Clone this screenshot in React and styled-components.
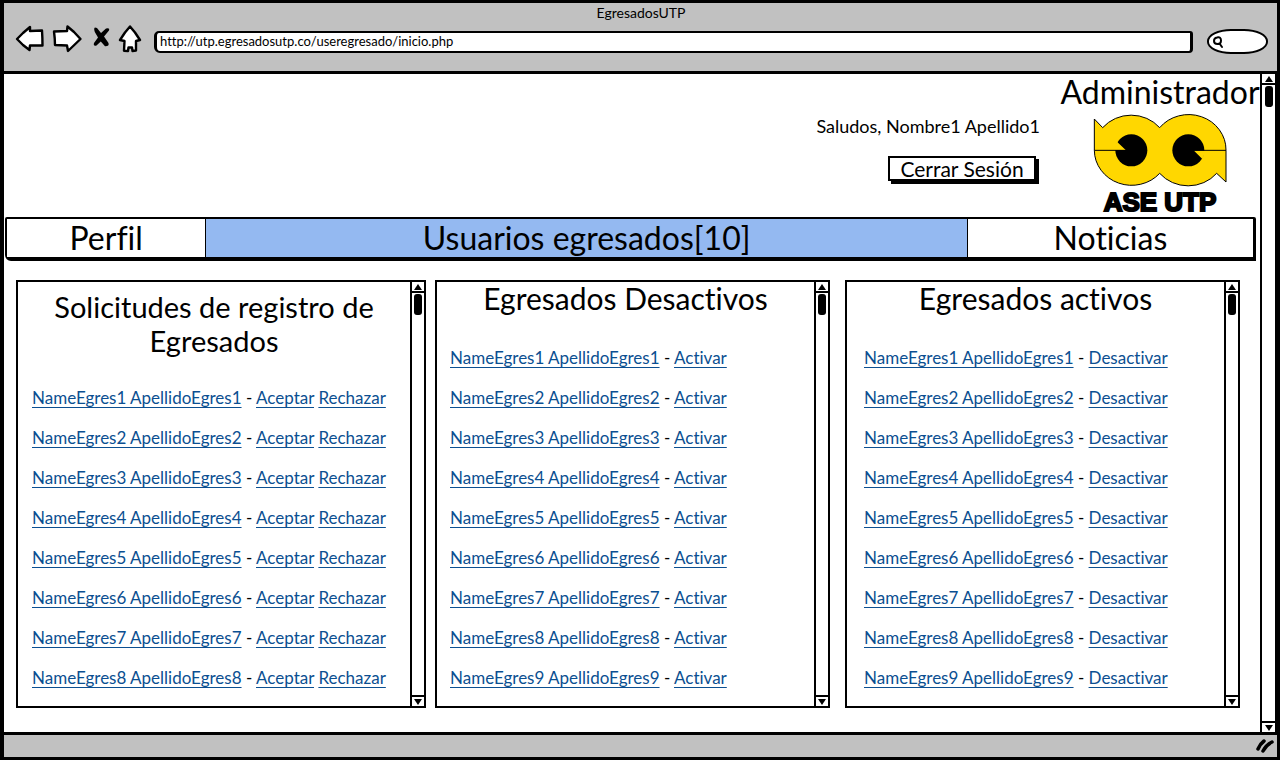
import React from "react";
import styled, { createGlobalStyle } from "styled-components";

const INK = "#000000";
const CHROME = "#c1c1c1";
const LINK = "#0b4f91";

const GlobalStyle = createGlobalStyle`
  * { box-sizing: border-box; }
  body {
    margin: 0;
    background: #ffffff;
    color: ${INK};
    font-family: Lato, "Open Sans", sans-serif;
    font-variant-ligatures: none;
  }
  button, input { font-family: inherit; color: inherit; font-variant-ligatures: none; }
  h1, h2, p, ul { margin: 0; padding: 0; font-weight: 400; }
`;

const Window = styled.div`
  display: flex;
  flex-direction: column;
  min-height: 100vh;
  border: 3px solid ${INK};
  border-left-width: 4px;
`;

const Chrome = styled.header`
  background: ${CHROME};
  border-bottom: 3px solid ${INK};
  padding: 0 9px 17px 10px;
`;

const WindowTitle = styled.p`
  font-size: 14px;
  line-height: 20px;
  text-align: center;
`;

const Toolbar = styled.div`
  display: flex;
  align-items: center;
  gap: 2px;
`;

const IconButton = styled.button`
  display: block;
  width: ${(p) => p.$width}px;
  height: 28px;
  padding: 0;
  border: 0;
  background: none;
`;

const Glyph = styled.svg`
  display: block;
`;

const Address = styled.input`
  flex: 1;
  min-width: 0;
  height: 22px;
  margin: 6px 12px 0 8px;
  padding: 0 3px 2px;
  border: 2px solid ${INK};
  border-width: 2px 3px;
  border-radius: 5px 3px 4px 6px;
  background: #ffffff;
  font-size: 13px;
`;

const SearchBox = styled.label`
  display: flex;
  align-items: center;
  width: 61px;
  height: 25px;
  margin-top: 6px;
  padding-left: 2px;
  border: 2px solid ${INK};
  border-radius: 24px / 12px;
  background: #ffffff;
`;

const SearchInput = styled.input`
  width: 36px;
  border: 0;
  padding: 0;
  background: none;
  font-size: 13px;
`;

const Viewport = styled.div`
  display: flex;
  flex: 1;
`;

const Page = styled.main`
  flex: 1;
  min-width: 0;
`;

const Head = styled.div`
  display: flex;
  justify-content: flex-end;
  height: 143px;
`;

const Account = styled.div`
  display: flex;
  flex-direction: column;
  align-items: flex-end;
  gap: 20px;
  padding-top: 42px;
`;

const Greeting = styled.p`
  font-size: 18px;
  line-height: 20px;
`;

const LogoutButton = styled.button`
  width: 148px;
  height: 25px;
  margin-right: 4px;
  padding: 0;
  border: 2px solid ${INK};
  background: #ffffff;
  box-shadow: 3px 3px 0 ${INK};
  font-size: 21px;
  line-height: 20px;
`;

const Brand = styled.div`
  display: flex;
  flex-direction: column;
  align-items: center;
  width: 200px;
  margin-left: 20px;
`;

const Role = styled.h1`
  padding-bottom: 4px;
  font-size: 32px;
  line-height: 36px;
`;

const BrandName = styled.p`
  font-family: "Liberation Sans", Arial, sans-serif;
  font-size: 26px;
  font-weight: 700;
  line-height: 28px;
  -webkit-text-stroke: 2px ${INK};
`;

const Tabs = styled.nav`
  display: grid;
  grid-template-columns: 199fr 764fr 287fr;
  margin: 0 4px 19px 1px;
  border: 2px solid ${INK};
  border-width: 2px 3px 4px 2px;
  border-radius: 2px 2px 0 6px;
`;

const Tab = styled.a`
  padding-bottom: 1px;
  border-left: ${(p) => (p.$first ? "0" : `1px solid ${INK}`)};
  background: ${(p) => (p.$active ? "#94b9f1" : "#ffffff")};
  color: ${INK};
  font-size: 32px;
  line-height: 37px;
  text-align: center;
  text-decoration: none;
`;

const Panels = styled.div`
  display: grid;
  grid-template-columns: 410fr 404fr 410fr;
  margin: 0 20px 24px 12px;
`;

const Panel = styled.section`
  display: flex;
  margin-left: ${(p) => p.$lead}px;
  border: 2px solid ${INK};
`;

const PanelBody = styled.div`
  flex: 1;
  min-width: 0;
  padding: ${(p) => (p.$roomy ? 8 : 0)}px 0 8px;
`;

const PanelTitle = styled.h2`
  margin-bottom: 20px;
  padding: 0 20px;
  font-size: 29px;
  line-height: 34px;
  text-align: center;
`;

const CompactTitle = styled(PanelTitle)`
  margin-bottom: 24px;
  font-size: 30px;
  line-height: 32px;
`;

const People = styled.ul`
  padding-left: ${(p) => p.$inset}px;
  list-style: none;
`;

const Person = styled.li`
  font-size: 17px;
  line-height: 40px;
  white-space: nowrap;
`;

const TextLink = styled.a`
  color: ${LINK};
  text-decoration: underline 1px ${LINK};
  text-underline-offset: 3px;
  text-decoration-skip-ink: none;
`;

const Track = styled.div`
  display: flex;
  flex-direction: column;
  justify-content: space-between;
  width: ${(p) => (p.$page ? 17 : 14)}px;
  border-left: 2px solid ${INK};
  border-right: ${(p) => (p.$page ? `2px solid ${INK}` : "0")};
`;

const Arrow = styled.button`
  display: flex;
  align-items: center;
  justify-content: center;
  width: 100%;
  height: 11px;
  padding: 0;
  border: 0 solid ${INK};
  border-width: ${(p) => (p.$down ? "2px 0 0" : "0 0 2px")};
  background: #ffffff;
`;

const Thumb = styled.div`
  width: 8px;
  height: 21px;
  margin: 1px auto 0;
  border-radius: 3px;
  background: ${INK};
`;

const Status = styled.footer`
  display: flex;
  justify-content: flex-end;
  align-items: center;
  height: 25px;
  border-top: 3px solid ${INK};
  background: ${CHROME};
`;

function ScrollBar({ page }) {
  return (
    <Track $page={page}>
      <div>
        <Arrow aria-label="Subir">
          <Glyph width="8" height="6" viewBox="0 0 8 6">
            <path d="M4 0 L8 6 H0 Z" />
          </Glyph>
        </Arrow>
        <Thumb />
      </div>
      <Arrow $down aria-label="Bajar">
        <Glyph width="8" height="6" viewBox="0 0 8 6">
          <path d="M0 0 H8 L4 6 Z" />
        </Glyph>
      </Arrow>
    </Track>
  );
}

const outline = {
  fill: "#ffffff",
  stroke: INK,
  strokeWidth: 2.4,
  strokeLinejoin: "round",
};

function NavButtons() {
  return (
    <>
      <IconButton $width={34} aria-label="Atrás">
        <Glyph width="34" height="28" viewBox="0 0 34 28">
          <path {...outline} d="M3 14 L9 8 L16 2 L16 6 L28 5.500 Q28.500 13 28.500 20.500 L16 20.500 L15.500 25 L9 20 Z" />
        </Glyph>
      </IconButton>
      <IconButton $width={34} aria-label="Adelante">
        <Glyph width="34" height="28" viewBox="0 0 34 28">
          <path {...outline} d="M4 6.500 L17 6 L17.500 1.500 L24 7 L30.500 14 L18 26 L17 20.500 L5 20 Q5 14 4 6.500 Z" />
        </Glyph>
      </IconButton>
      <IconButton $width={28} aria-label="Detener">
        <Glyph width="28" height="28" viewBox="0 0 28 28">
          <path d="M9 2.500 L11 3 L15 8 L20 3.500 Q24 2.500 23 5.500 L18 11.500 L22.500 18 Q23.500 21.500 19 21.300 L14.800 16.500 L10.500 20.500 Q7 21.500 8 18 L12 12.500 L8.800 7 Q7.500 3 9 2.500 Z" />
        </Glyph>
      </IconButton>
      <IconButton $width={28} aria-label="Inicio">
        <Glyph width="28" height="28" viewBox="0 0 28 28">
          <path {...outline} d="M14 1.500 L19 7.500 L24 15 L20 16 L20 25.500 L16.500 26 L16 22.500 L12.500 22.500 L12 26 L8 25.800 L8.500 16 L4 15 L9 7.500 Z" />
        </Glyph>
      </IconButton>
    </>
  );
}

function OwlMark() {
  return (
    <Glyph width="134" height="74" viewBox="131 132 402 222">
      <path
        d="M135 147 L160 173 A112 106 0 0 1 331 173 A112 106 0 0 1 530 241 V336 L502 310 A112 106 0 0 1 331 310 A112 106 0 0 1 135 241 Z"
        fill="#ffd700"
        stroke={INK}
        strokeWidth="3"
      />
      <circle cx="246" cy="241" r="48" />
      <circle cx="417" cy="241" r="48" />
      <path d="M229 240 L203 215 L192 240 Z M434 242 L459 267 L470 242 Z" fill="#ffd700" />
      <path d="M135 241 H229 M434 241 H530" stroke={INK} strokeWidth="3" />
    </Glyph>
  );
}

const columns = [
  {
    title: "Solicitudes de registro de Egresados",
    actions: ["Aceptar", "Rechazar"],
    count: 8,
    lead: 0,
    inset: 14,
    roomy: true,
  },
  { title: "Egresados Desactivos", actions: ["Activar"], count: 9, lead: 9, inset: 13 },
  { title: "Egresados activos", actions: ["Desactivar"], count: 9, lead: 15, inset: 17 },
];

function PeoplePanel({ title, actions, count, lead, inset, roomy }) {
  const Title = roomy ? PanelTitle : CompactTitle;
  const numbers = Array.from({ length: count }, (_, i) => i + 1);
  return (
    <Panel $lead={lead}>
      <PanelBody $roomy={roomy}>
        <Title>{title}</Title>
        <People $inset={inset}>
          {numbers.map((n) => (
            <Person key={n}>
              <TextLink href="#perfil">{`NameEgres${n} ApellidoEgres${n}`}</TextLink>
              {" - "}
              {actions.map((action, i) => (
                <React.Fragment key={action}>
                  {i > 0 && " "}
                  <TextLink href={`#${action.toLowerCase()}`}>{action}</TextLink>
                </React.Fragment>
              ))}
            </Person>
          ))}
        </People>
      </PanelBody>
      <ScrollBar />
    </Panel>
  );
}

export default function App() {
  return (
    <>
      <GlobalStyle />
      <Window>
        <Chrome>
          <WindowTitle>EgresadosUTP</WindowTitle>
          <Toolbar>
            <NavButtons />
            <Address
              aria-label="Dirección"
              defaultValue="http://utp.egresadosutp.co/useregresado/inicio.php"
            />
            <SearchBox>
              <Glyph width="13" height="14" viewBox="0 0 13 14" role="img" aria-label="Buscar">
                <path
                  d="M6 2.500 Q10 1.500 10 5.500 Q10 9 6.500 9 Q3 9 3 6 Q3 3 6 2.500 Z M8.500 8.500 L11 12"
                  fill="none"
                  stroke={INK}
                  strokeWidth="2"
                  strokeLinecap="round"
                />
              </Glyph>
              <SearchInput />
            </SearchBox>
          </Toolbar>
        </Chrome>
        <Viewport>
          <Page>
            <Head>
              <Account>
                <Greeting>Saludos, Nombre1 Apellido1</Greeting>
                <LogoutButton>Cerrar Sesión</LogoutButton>
              </Account>
              <Brand>
                <Role>Administrador</Role>
                <OwlMark />
                <BrandName>ASE UTP</BrandName>
              </Brand>
            </Head>
            <Tabs>
              <Tab href="#perfil" $first>Perfil</Tab>
              <Tab href="#usuarios" $active aria-current="page">Usuarios egresados[10]</Tab>
              <Tab href="#noticias">Noticias</Tab>
            </Tabs>
            <Panels>
              {columns.map((column) => (
                <PeoplePanel key={column.title} {...column} />
              ))}
            </Panels>
          </Page>
          <ScrollBar page />
        </Viewport>
        <Status>
          <Glyph width="22" height="16" viewBox="0 0 22 16">
            <path
              d="M3 11 Q5 6 9 3 M8 13 Q11 7 17 4"
              fill="none"
              stroke={INK}
              strokeWidth="3.5"
              strokeLinecap="round"
            />
          </Glyph>
        </Status>
      </Window>
    </>
  );
}
